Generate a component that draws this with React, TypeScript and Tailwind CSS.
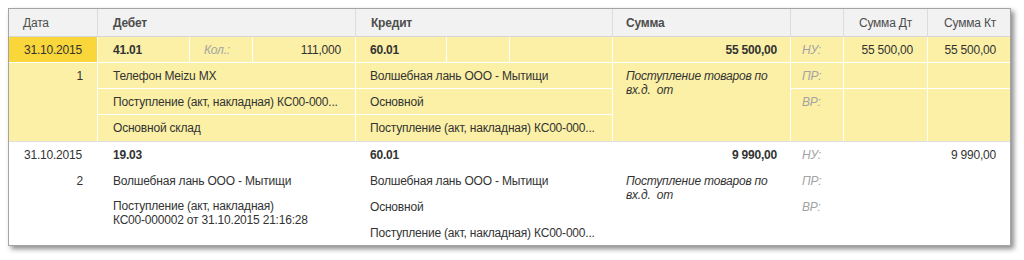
import React from 'react';

const COLS = 'grid grid-cols-[88px_91px_62px_102px_90px_62px_102px_177px_52px_83px_82px] gap-px';

const Label: React.FC<{ text: string }> = ({ text }) => (
  <span className="italic text-[#a3a3a3]">{text}</span>
);

const App: React.FC = () => {
  const yCell = 'bg-[#fbf0a5] flex items-center';
  return (
    <div className="w-[1024px] h-[260px] bg-white pt-2 pl-2 font-['Liberation_Sans',Arial,sans-serif] text-[12px] tracking-[-0.2px] text-[#333]">
      <div className="w-[1003px] h-[238px] border border-[#a4a4a4] bg-white shadow-[3px_3px_5px_rgba(0,0,0,0.45)] overflow-hidden">
        {/* Header */}
        <div className={`${COLS} bg-[#dcdcdc] border-b border-[#d6d6d6] text-[#4d4d4d]`}>
          <div className="h-[27px] bg-[#f2f2f2] flex items-center pl-[14px]">Дата</div>
          <div className="col-span-3 bg-[#f2f2f2] flex items-center pl-[15px] font-bold">Дебет</div>
          <div className="col-span-3 bg-[#f2f2f2] flex items-center pl-[15px] font-bold">Кредит</div>
          <div className="bg-[#f2f2f2] flex items-center pl-[13px] font-bold">Сумма</div>
          <div className="bg-[#f2f2f2]" />
          <div className="bg-[#f2f2f2] flex items-center justify-end pr-[15px]">Сумма Дт</div>
          <div className="bg-[#f2f2f2] flex items-center justify-end pr-[14px]">Сумма Кт</div>
        </div>

        {/* Row 1 - selected */}
        <div className={`${COLS} grid-rows-[25px_25px_25px_26px] bg-white`}>
          <div className="bg-[#f9d63a] flex items-center justify-end pr-[15px]">31.10.2015</div>
          <div className={`${yCell} pl-[15px] font-bold`}>41.01</div>
          <div className={`${yCell} pl-[14px]`}><Label text="Кол.:" /></div>
          <div className={`${yCell} justify-end pr-[14px]`}>111,000</div>
          <div className={`${yCell} pl-[14px] font-bold`}>60.01</div>
          <div className={yCell} />
          <div className={yCell} />
          <div className={`${yCell} justify-end pr-[13px] font-bold`}>55 500,00</div>
          <div className={`${yCell} pl-[11px]`}><Label text="НУ:" /></div>
          <div className={`${yCell} justify-end pr-[14px]`}>55 500,00</div>
          <div className={`${yCell} justify-end pr-[14px]`}>55 500,00</div>

          <div className="row-span-3 bg-[#fbf0a5]">
            <div className="h-[25px] flex items-center justify-end pr-[14px]">1</div>
          </div>
          <div className={`${yCell} col-span-3 pl-[15px]`}>Телефон Meizu MX</div>
          <div className={`${yCell} col-span-3 pl-[14px]`}>Волшебная лань ООО - Мытищи</div>
          <div className="row-span-3 bg-[#fbf0a5] pl-[13px] pt-[6px] leading-[14px] italic">
            Поступление товаров по
            <br />
            вх.д.&nbsp; от
          </div>
          <div className={`${yCell} pl-[11px]`}><Label text="ПР:" /></div>
          <div className={yCell} />
          <div className={yCell} />

          <div className={`${yCell} col-span-3 pl-[15px]`}>Поступление (акт, накладная) КС00-000...</div>
          <div className={`${yCell} col-span-3 pl-[14px]`}>Основной</div>
          <div className="row-span-2 bg-[#fbf0a5] pl-[11px]">
            <div className="h-[25px] flex items-center"><Label text="ВР:" /></div>
          </div>
          <div className="row-span-2 bg-[#fbf0a5]" />
          <div className="row-span-2 bg-[#fbf0a5]" />

          <div className={`${yCell} col-span-3 pl-[15px]`}>Основной склад</div>
          <div className={`${yCell} col-span-3 pl-[14px]`}>Поступление (акт, накладная) КС00-000...</div>
        </div>

        {/* Row 2 */}
        <div className={`${COLS} grid-rows-[25px_25px_25px_25px] border-t border-[#dedede] bg-white`}>
          <div className="flex items-center justify-end pr-[15px]">31.10.2015</div>
          <div className="col-span-3 flex items-center pl-[15px] font-bold">19.03</div>
          <div className="col-span-3 flex items-center pl-[14px] font-bold">60.01</div>
          <div className="flex items-center justify-end pr-[13px] font-bold">9 990,00</div>
          <div className="flex items-center pl-[11px]"><Label text="НУ:" /></div>
          <div />
          <div className="flex items-center justify-end pr-[14px]">9 990,00</div>

          <div className="flex items-center justify-end pr-[14px]">2</div>
          <div className="col-span-3 flex items-center pl-[15px]">Волшебная лань ООО - Мытищи</div>
          <div className="col-span-3 flex items-center pl-[14px]">Волшебная лань ООО - Мытищи</div>
          <div className="row-span-3 pl-[13px] pt-[6px] leading-[14px] italic">
            Поступление товаров по
            <br />
            вх.д.&nbsp; от
          </div>
          <div className="flex items-center pl-[11px]"><Label text="ПР:" /></div>
          <div />
          <div />

          <div className="row-span-2" />
          <div className="col-span-3 row-span-2 pl-[15px] pt-[5px] leading-[14px]">
            Поступление (акт, накладная)
            <br />
            КС00-000002 от 31.10.2015 21:16:28
          </div>
          <div className="col-span-3 flex items-center pl-[14px]">Основной</div>
          <div className="flex items-center pl-[11px]"><Label text="ВР:" /></div>
          <div />
          <div />

          <div className="col-span-3 flex items-center pl-[14px]">Поступление (акт, накладная) КС00-000...</div>
        </div>
      </div>
    </div>
  );
};

export default App;
